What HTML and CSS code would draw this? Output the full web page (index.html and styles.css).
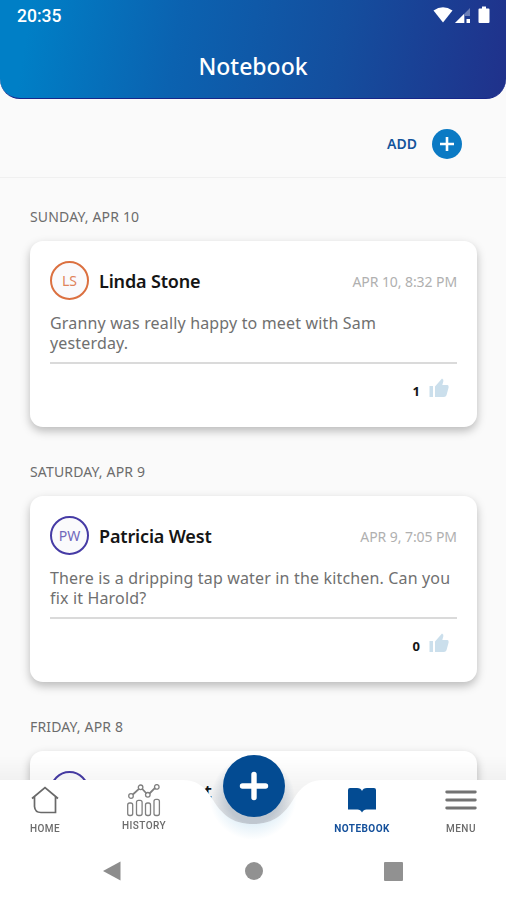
FILE: index.html
```html
<!DOCTYPE html>
<html lang="en">
<head>
  <meta charset="UTF-8">
  <title>Notebook</title>
  <meta name="viewport" content="width=device-width, initial-scale=1.0">
  <link rel="stylesheet" href="styles.css">
</head>
<body>
  <div class="header">
    <div class="status-bar">
      <div class="clock">20:35</div>
      <svg class="status-icons" width="58" height="20" viewBox="0 0 58 20">
        <path d="M0.5 4.5Q10 -2 19.5 4.5L10 16.5Z" fill="#fff"/>
        <path d="M22 17L37 2V10H32V17Z" fill="#fff" opacity=".35"/>
        <path d="M22 17L31 8V17Z" fill="#fff"/>
        <rect x="33.5" y="13" width="3.5" height="4" fill="#fff"/>
        <path d="M46.5 2.5H49V0.5H53V2.5H55.5Q56.5 2.5 56.5 3.5V16Q56.5 17 55.5 17H46.5Q45.5 17 45.5 16V3.5Q45.5 2.5 46.5 2.5Z" fill="#fff"/>
      </svg>
    </div>
    <h1>Notebook</h1>
  </div>

  <div class="toolbar">
    <div class="add-label">ADD</div>
    <div class="add-button">
      <svg width="30" height="30" viewBox="0 0 30 30"><path d="M15 8V22M8 15H22" stroke="#fff" stroke-width="2.6"/></svg>
    </div>
  </div>

  <div class="container">
    <h2>SUNDAY, APR 10</h2>
    <div class="note">
      <div class="note-head">
        <div class="avatar orange">LS</div>
        <div class="name">Linda Stone</div>
        <div class="timestamp">APR 10, 8:32 PM</div>
      </div>
      <p>Granny was really happy to meet with Sam<br>yesterday.</p>
      <div class="likes">
        <span>1</span>
        <svg width="20" height="20" viewBox="0 0 20 20"><path d="M0.5 8H4V19H0.5ZM6 19V8.5L13 0.5Q15 1.5 14.3 3.5L13.3 7H18.5Q20 7.3 19.6 9.5L17.5 17.2Q16.8 19 15 19Z" fill="#cbdfec"/></svg>
      </div>
    </div>

    <h2>SATURDAY, APR 9</h2>
    <div class="note">
      <div class="note-head">
        <div class="avatar">PW</div>
        <div class="name">Patricia West</div>
        <div class="timestamp">APR 9, 7:05 PM</div>
      </div>
      <p>There is a dripping tap water in the kitchen. Can you<br>fix it Harold?</p>
      <div class="likes">
        <span>0</span>
        <svg width="20" height="20" viewBox="0 0 20 20"><path d="M0.5 8H4V19H0.5ZM6 19V8.5L13 0.5Q15 1.5 14.3 3.5L13.3 7H18.5Q20 7.3 19.6 9.5L17.5 17.2Q16.8 19 15 19Z" fill="#cbdfec"/></svg>
      </div>
    </div>

    <h2>FRIDAY, APR 8</h2>
    <div class="note">
      <div class="note-head">
        <div class="avatar">PW</div>
        <div class="name">Patricia West</div>
      </div>
    </div>
  </div>

  <div class="bottom-nav">
    <!-- bar with the notch for the round button -->
    <svg class="nav-shape" width="506" height="150" viewBox="0 0 506 150">
      <defs>
        <linearGradient id="fade" x1="0" y1="0" x2="0" y2="1">
          <stop offset="0" stop-color="#000" stop-opacity="0"/>
          <stop offset="1" stop-color="#000" stop-opacity=".08"/>
        </linearGradient>
        <radialGradient id="notch" gradientUnits="userSpaceOnUse" cx="253" cy="48" r="42">
          <stop offset=".6" stop-color="#3c5c80" stop-opacity=".25"/>
          <stop offset="1" stop-color="#3c5c80" stop-opacity="0"/>
        </radialGradient>
        <radialGradient id="halo" gradientUnits="userSpaceOnUse" cx="253" cy="46" r="44">
          <stop offset=".6" stop-color="#8fc4e4" stop-opacity=".28"/>
          <stop offset="1" stop-color="#8fc4e4" stop-opacity="0"/>
        </radialGradient>
        <clipPath id="below"><path d="M180 30C196 30 204 35 213 50C224 68 236 74 253 74C270 74 282 68 293 50C302 35 310 30 326 30V150H180Z"/></clipPath>
      </defs>
      <rect y="6" width="506" height="54" fill="url(#fade)"/>
      <rect y="60" width="506" height="20" fill="#000" opacity=".08"/>
      <circle cx="253" cy="48" r="42" fill="url(#notch)"/>
      <path d="M0 30H180C196 30 204 35 213 50C224 68 236 74 253 74C270 74 282 68 293 50C302 35 310 30 326 30H506V150H0Z" fill="#fff"/>
      <circle cx="253" cy="46" r="44" fill="url(#halo)" clip-path="url(#below)"/>
    </svg>

    <div class="bottom-nav-container">
      <a href="#" class="nav-item home">
        <svg width="30" height="30" viewBox="0 0 30 30"><path d="M2 13.5L15 2.5L28 13.5M4.5 12V21.5Q5 27.5 11 27.5H25.5V12" fill="none" stroke="#696969" stroke-width="1.7"/></svg>
        <div>HOME</div>
      </a>
      <a href="#" class="nav-item history">
        <svg width="36" height="34" viewBox="0 0 36 34"><g fill="none" stroke="#808080" stroke-width="1.3"><path d="M6.8 10.5L13 4.8M16.3 5L20.5 9.5M23.5 9.5L29.3 3.7" stroke-width="1.8"/><circle cx="5" cy="12" r="2.3"/><circle cx="14.6" cy="3.3" r="2.3"/><circle cx="21.8" cy="10.8" r="2.3"/><circle cx="30.8" cy="2.9" r="2.3"/><rect x="1.7" y="19" width="5" height="12.5" rx="2"/><rect x="10.5" y="16.3" width="5.6" height="15.2" rx="2"/><rect x="19.5" y="19" width="5" height="12.5" rx="2"/><rect x="28" y="15.3" width="5.4" height="16.2" rx="2"/></g></svg>
        <div>HISTORY</div>
      </a>
      <a href="#" class="nav-item notebook active">
        <svg width="30" height="26" viewBox="0 0 30 26"><path d="M3 1H10Q14 1 15 4Q16 1 20 1H27Q29 1 29 3V22.5H19.5Q16.5 22.5 15 25.5Q13.5 22.5 10.5 22.5H1V3Q1 1 3 1Z" fill="#034b92"/></svg>
        <div>NOTEBOOK</div>
      </a>
      <a href="#" class="nav-item menu">
        <svg width="32" height="22" viewBox="0 0 32 22"><path d="M1.7 3H30.3M1.7 11H30.3M1.7 19H30.3" stroke="#737373" stroke-width="2.8" stroke-linecap="round"/></svg>
        <div>MENU</div>
      </a>
    </div>

    <div class="plus-button">
      <svg width="62" height="62" viewBox="0 0 62 62"><path d="M31 19.5V42.5M19.5 31H42.5" stroke="#fff" stroke-width="5.4" stroke-linecap="round"/></svg>
    </div>

    <div class="system-nav">
      <svg width="20" height="20" viewBox="0 0 20 20"><path d="M0 10L17.5 0.5V19.5Z" fill="#8d8d8d"/></svg>
      <div class="round"></div>
      <div class="square"></div>
    </div>
  </div>
</body>
</html>
```
FILE: styles.css
```css
body {
  font-family: "Noto Sans", sans-serif;
  background-color: #fafafa;
  margin: 0;
}
.header {
  height: 99px;
  box-sizing: border-box;
  background: linear-gradient(99deg, #007fc6 6%, #0b62b0 35%, #144e9e 67%, #20318b 100%);
  border-bottom: 1px solid #17268a;
  border-radius: 0 0 20px 20px;
  color: white;
}
.status-bar {
  display: flex;
  justify-content: space-between;
  padding: 6px 15px 0 17px;
  height: 26px;
}
.clock {
  font-family: Roboto, sans-serif;
  font-size: 17.5px;
  font-weight: 500;
  line-height: 21px;
}
h1 {
  margin: 16px 0 0;
  font-size: 23px;
  font-weight: 500;
  line-height: 36px;
  text-align: center;
}
.toolbar {
  display: flex;
  justify-content: flex-end;
  align-items: center;
  gap: 15px;
  height: 79px;
  box-sizing: border-box;
  padding: 11px 44px 0 0;
  border-bottom: 1px solid #f0f0f0;
}
.add-label {
  font-size: 14px;
  font-weight: 600;
  color: #14549b;
}
.add-button {
  width: 30px;
  height: 30px;
  border-radius: 50%;
  background-color: #0b7ac4;
}
.add-button svg {
  display: block;
}
.container {
  height: 722px;
  box-sizing: border-box;
  overflow: hidden;
  padding: 29px 29px 0 30px;
}
h2 {
  margin: 0 0 14px;
  font-size: 14px;
  font-weight: 400;
  letter-spacing: 0.17px;
  line-height: 20px;
  color: #6c6c6c;
}
.note {
  height: 186px;
  box-sizing: border-box;
  margin-bottom: 35px;
  padding: 20px;
  background-color: white;
  border-radius: 13px;
  box-shadow: 0 4px 10px rgba(0,0,0,0.26);
}
.note-head {
  display: flex;
  align-items: center;
  height: 39px;
}
.avatar {
  width: 39px;
  height: 39px;
  box-sizing: border-box;
  border: 2px solid #463ba5;
  border-radius: 50%;
  margin-right: 10px;
  background-color: #fafafc;
  color: #7168bb;
  font-size: 14px;
  line-height: 35px;
  text-align: center;
}
.avatar.orange {
  border-color: #db7040;
  color: #e0835a;
}
.name {
  font-size: 18px;
  font-weight: 600;
  letter-spacing: -0.16px;
  color: #151515;
  line-height: 24px;
}
.timestamp {
  margin: 2px 0 0 auto;
  font-size: 14px;
  letter-spacing: -0.08px;
  color: #b0b0b0;
}
.note p {
  margin: 13px 0 0;
  padding-bottom: 9px;
  border-bottom: 2px solid #dadada;
  font-size: 16px;
  letter-spacing: 0.16px;
  line-height: 20px;
  color: #707070;
  white-space: nowrap;
}
.likes {
  display: flex;
  justify-content: flex-end;
  gap: 9px;
  padding: 14px 8px 0 0;
}
.likes span {
  font-size: 13px;
  font-weight: 700;
  line-height: 26px;
  color: #151515;
}

/* Bottom Navigation */
.bottom-nav {
  position: fixed;
  bottom: 0;
  left: 0;
  width: 100%;
  height: 120px;
}
.nav-shape {
  position: absolute;
  left: 0;
  bottom: 0;
}
.bottom-nav-container {
  position: relative;
  display: flex;
  height: 60px;
  padding: 0 13px;
}
.nav-item {
  display: flex;
  flex-direction: column;
  align-items: center;
  justify-content: flex-end;
  width: 64px;
  box-sizing: border-box;
  font-family: Roboto, sans-serif;
  font-size: 10px;
  font-weight: 500;
  letter-spacing: 0.45px;
  line-height: 12px;
  color: #6b6b6b;
  text-decoration: none;
}
.home {
  gap: 8px;
  padding-bottom: 5px;
}
.history {
  gap: 2px;
  margin-left: 35px;
  padding-bottom: 8px;
}
.notebook {
  gap: 10px;
  width: 70px;
  margin-left: auto;
  padding-bottom: 5px;
}
.menu {
  gap: 12px;
  margin-left: 32px;
  padding-bottom: 5px;
}
.nav-item.active {
  color: #14509b;
  font-weight: 700;
}
.plus-button {
  position: absolute;
  left: 223px;
  top: -25px;
  width: 62px;
  height: 62px;
  border-radius: 50%;
  background-color: #034b92;
}
.system-nav {
  position: relative;
  display: flex;
  align-items: center;
  justify-content: space-between;
  height: 20px;
  margin-top: 21px;
  padding: 0 103px;
}
.round {
  width: 18px;
  height: 18px;
  border-radius: 50%;
  background-color: #919191;
}
.square {
  width: 19px;
  height: 19px;
  border-radius: 1px;
  background-color: #919191;
}
```
